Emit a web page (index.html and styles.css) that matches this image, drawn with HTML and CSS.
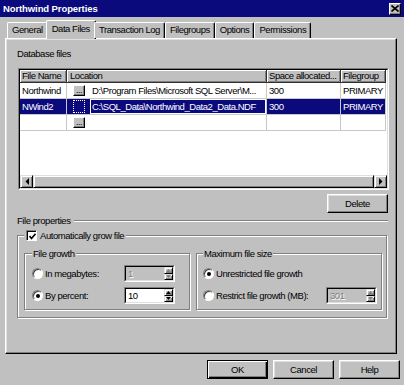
FILE: index.html
```html
<!DOCTYPE html>
<html>
<head>
<meta charset="utf-8">
<link rel="stylesheet" href="styles.css">
</head>
<body>
<div class="window">
  <div class="titlebar">
    <span class="title">Northwind Properties</span>
    <span class="close"><svg width="8" height="7" viewBox="0 0 8 7"><path d="M0.5 0.5 L7.5 6.5 M7.5 0.5 L0.5 6.5" stroke="#000" stroke-width="1.6"/></svg></span>
  </div>
  <div class="tabs">
    <div class="tab">General</div>
    <div class="tab active">Data Files</div>
    <div class="tab">Transaction Log</div>
    <div class="tab">Filegroups</div>
    <div class="tab">Options</div>
    <div class="tab">Permissions</div>
  </div>
  <div class="panel">
    <div class="label">Database files</div>
    <div class="grid">
      <div class="grid-inner">
        <div class="cols head">
          <div class="hcell">File Name</div>
          <div class="hcell">Location</div>
          <div class="hcell">Space allocated...</div>
          <div class="hcell">Filegroup</div>
        </div>
        <div class="cols row">
          <div class="cell">Northwind</div>
          <div class="cell loc"><span class="dots">...</span><span class="loctext">D:\Program Files\Microsoft SQL Server\M...</span></div>
          <div class="cell">300</div>
          <div class="cell">PRIMARY</div>
        </div>
        <div class="cols row selected">
          <div class="cell">NWind2</div>
          <div class="cell loc"><span class="focus"></span><span class="edit"><span class="sel">C:\SQL_Data\Northwind_Data2_Data.NDF</span></span></div>
          <div class="cell">300</div>
          <div class="cell">PRIMARY</div>
        </div>
        <div class="cols row">
          <div class="cell"></div>
          <div class="cell loc"><span class="dots">...</span></div>
          <div class="cell"></div>
          <div class="cell"></div>
        </div>
        <div class="fill"></div>
        <div class="hscroll">
          <span class="sbtn"><svg width="4" height="7" viewBox="0 0 4 7"><polygon points="4,0 4,7 0.5,3.5" fill="#000"/></svg></span>
          <span class="thumb"></span>
          <span class="sbtn"><svg width="4" height="7" viewBox="0 0 4 7"><polygon points="0,0 0,7 3.5,3.5" fill="#000"/></svg></span>
        </div>
      </div>
    </div>
    <div class="delete-row"><span class="btn">Delete</span></div>
    <div class="section"><span>File properties</span><span class="rule"></span></div>
    <div class="group outer">
      <div class="legend"><span class="check"><svg width="7" height="7" viewBox="0 0 7 7"><polyline points="0.5,3 2.5,5.5 6.5,0.8" fill="none" stroke="#000" stroke-width="1.6"/></svg></span><span>Automatically grow file</span></div>
      <div class="subgroups">
        <div class="group growth">
          <div class="legend">File growth</div>
          <div class="opt">
            <span class="radio"></span><span class="optlabel">In megabytes:</span>
            <span class="spin disabled"><span class="spin-in"><span class="val">1</span><span class="arrows"><span class="abtn"><svg width="5" height="3" viewBox="0 0 5 3"><polygon points="0,3 5,3 2.5,0" fill="#808080"/></svg></span><span class="abtn"><svg width="5" height="3" viewBox="0 0 5 3"><polygon points="0,0 5,0 2.5,3" fill="#808080"/></svg></span></span></span></span>
          </div>
          <div class="opt">
            <span class="radio on"></span><span class="optlabel">By percent:</span>
            <span class="spin"><span class="spin-in"><span class="val">10</span><span class="arrows"><span class="abtn"><svg width="5" height="3" viewBox="0 0 5 3"><polygon points="0,3 5,3 2.5,0" fill="#000"/></svg></span><span class="abtn"><svg width="5" height="3" viewBox="0 0 5 3"><polygon points="0,0 5,0 2.5,3" fill="#000"/></svg></span></span></span></span>
          </div>
        </div>
        <div class="group maxsize">
          <div class="legend">Maximum file size</div>
          <div class="opt">
            <span class="radio on"></span><span class="optlabel">Unrestricted file growth</span>
          </div>
          <div class="opt">
            <span class="radio"></span><span class="optlabel">Restrict file growth (MB):</span>
            <span class="spin disabled"><span class="spin-in"><span class="val">301</span><span class="arrows"><span class="abtn"><svg width="5" height="3" viewBox="0 0 5 3"><polygon points="0,3 5,3 2.5,0" fill="#808080"/></svg></span><span class="abtn"><svg width="5" height="3" viewBox="0 0 5 3"><polygon points="0,0 5,0 2.5,3" fill="#808080"/></svg></span></span></span></span>
          </div>
        </div>
      </div>
    </div>
  </div>
  <div class="buttons">
    <span class="btn default">OK</span>
    <span class="btn">Cancel</span>
    <span class="btn">Help</span>
  </div>
</div>
</body>
</html>
```

FILE: styles.css
```css
* { box-sizing: border-box; }
body {
  margin: 0;
  width: 404px;
  height: 385px;
  overflow: hidden;
  background: #c0c0c0;
  font-family: "Liberation Sans", Arial, sans-serif;
  font-size: 9.5px;
  letter-spacing: -0.45px;
  line-height: 11px;
  color: #000;
}
.window { display: flex; flex-direction: column; height: 385px; }

.titlebar {
  height: 17px;
  background: #0a0a7c;
  display: flex;
  align-items: center;
  justify-content: space-between;
  padding: 0 3px 0 3px;
}
.title { color: #fff; font-weight: bold; font-size: 9.5px; letter-spacing: -0.1px; }
.close {
  width: 12px; height: 12px;
  background: #c0c0c0;
  border: 1px solid; border-color: #fff #000 #000 #fff;
  box-shadow: inset -1px -1px 0 #808080;
  display: flex; align-items: center; justify-content: center;
}

.tabs {
  display: flex;
  align-items: flex-end;
  height: 21px;
  padding-left: 7px;
  position: relative;
  z-index: 1;
}
.tab {
  height: 16px;
  padding: 0 4px;
  line-height: 14px;
  border: 1px solid; border-bottom: none;
  border-color: #fff #000 #000 #fff;
  box-shadow: inset -1px 0 0 #808080;
  border-radius: 2px 2px 0 0;
  background: #c0c0c0;
}
.tab.active {
  height: 19px;
  margin: 0 -1px -1px -2px;
  padding: 0 5px;
  line-height: 15px;
}
.tab.active + .tab { margin-left: -1px; }

.panel {
  margin: 0 7px 0 5px;
  height: 316px;
  border: 1px solid;
  border-color: #fff #000 #000 #fff;
  box-shadow: inset -1px -1px 0 #808080, inset 1px 1px 0 #dfdfdf;
  padding: 0 8px 0 11px;
  display: flex;
  flex-direction: column;
}
.label { margin-top: 9px; }

.grid {
  margin-top: 9px;
  margin-left: 1px;
  width: 371px;
  height: 122px;
  border: 1px solid;
  border-color: #808080 #fff #fff #808080;
}
.grid-inner {
  height: 100%;
  border: 1px solid;
  border-color: #000 #dfdfdf #dfdfdf #000;
  display: flex;
  flex-direction: column;
  background: #fff;
}
.cols { display: grid; grid-template-columns: 47px 200px 74px 45px; }
.head { height: 13px; }
.hcell {
  background: #c0c0c0;
  border-right: 1px solid #303030;
  border-bottom: 1px solid #303030;
  box-shadow: inset 1px 1px 0 #fff, inset -1px -1px 0 #808080;
  padding-left: 2px;
  line-height: 12px;
  white-space: nowrap;
  overflow: hidden;
}
.hcell:nth-child(2) { padding-left: 3px; }
.row { height: 16px; }
.cell {
  border-right: 1px solid #c8c8c8;
  border-bottom: 1px solid #c8c8c8;
  padding-left: 2px;
  line-height: 15px;
  white-space: nowrap;
  overflow: hidden;
}
.cell.loc { display: flex; align-items: center; padding-left: 6px; }
.dots {
  width: 12px; height: 11px;
  flex: none;
  background: #c0c0c0;
  border: 1px solid; border-color: #fff #000 #000 #fff;
  box-shadow: inset -1px -1px 0 #808080;
  display: flex;
  align-items: flex-end;
  justify-content: center;
  font-size: 9px;
  line-height: 9px;
  letter-spacing: -0.5px;
  color: #000;
  overflow: hidden;
}
.loctext { margin-left: 7px; }
.selected .cell { background: #0a0a7c; color: #fff; }
.focus {
  width: 12px; height: 13px; flex: none;
  border: 1px dotted #fff;
}
.edit {
  margin-left: 5px;
  width: 177px;
  height: 15px;
  background: #fff;
  padding: 1px;
  display: flex;
}
.sel { background: #0a0a7c; color: #fff; flex: 1; padding-left: 1px; line-height: 13px; }
.fill { flex: 1; }
.hscroll { height: 13px; display: flex; background: #c0c0c0; }
.sbtn, .thumb {
  border: 1px solid; border-color: #dfdfdf #000 #000 #dfdfdf;
  box-shadow: inset 1px 1px 0 #fff, inset -1px -1px 0 #808080;
  background: #c0c0c0;
}
.sbtn { width: 13px; display: flex; align-items: center; justify-content: center; }
.thumb { flex: 1; }

.btn {
  display: flex; align-items: center; justify-content: center;
  width: 61px; height: 19px;
  background: #c0c0c0;
  border: 1px solid; border-color: #fff #000 #000 #fff;
  box-shadow: inset -1px -1px 0 #808080, inset 1px 1px 0 #dfdfdf;
}
.btn.default {
  border-color: #000;
  box-shadow: inset 1px 1px 0 #fff, inset -1px -1px 0 #000, inset -2px -2px 0 #808080;
}
.delete-row { display: flex; justify-content: flex-end; margin-top: 4px; }

.section { display: flex; align-items: center; gap: 4px; margin-top: 2px; }
.rule {
  flex: 1; height: 2px;
  border-top: 1px solid #808080;
  border-bottom: 1px solid #fff;
}

.group {
  border: 1px solid #808080;
  box-shadow: inset 1px 1px 0 #fff, 1px 1px 0 #fff;
}
.legend {
  margin-top: -6px;
  width: fit-content;
  background: #c0c0c0;
  padding: 0 2px;
  display: flex;
  align-items: center;
  gap: 3px;
}
.outer {
  margin-top: 9px;
  width: 370px;
  height: 83px;
}
.outer > .legend { margin-left: 6px; }
.check {
  width: 11px; height: 11px;
  background: #fff;
  border: 1px solid; border-color: #808080 #fff #fff #808080;
  box-shadow: inset 1px 1px 0 #000;
  display: flex; align-items: center; justify-content: center;
  padding: 1px 0 0 1px;
}
.subgroups { display: flex; gap: 6px; margin: 12px 0 0 6px; }
.subgroups .group { height: 57px; }
.growth { width: 166px; padding: 0 14px 0 7px; }
.maxsize { width: 186px; padding: 0 4px 0 6px; }
.subgroups .legend { margin-left: 0; padding: 0 1px; }
.opt { display: flex; align-items: center; height: 17px; }
.legend + .opt { margin-top: 6px; }
.opt + .opt { margin-top: 5px; }
.radio {
  width: 11px; height: 11px; flex: none;
  border-radius: 50%;
  background: #fff;
  border: 1px solid; border-color: #808080 #fff #fff #808080;
  box-shadow: inset 1px 1px 0 #404040;
  display: flex; align-items: center; justify-content: center;
}
.radio.on::after {
  content: "";
  width: 4px; height: 4px;
  border-radius: 50%;
  background: #000;
}
.optlabel { margin-left: 2px; }
.spin {
  margin-left: auto;
  width: 51px; height: 17px;
  border: 1px solid; border-color: #808080 #fff #fff #808080;
}
.spin-in {
  height: 100%;
  display: flex;
  border: 1px solid; border-color: #000 #dfdfdf #dfdfdf #000;
  background: #fff;
}
.val { flex: 1; padding-left: 2px; line-height: 13px; }
.spin.disabled .spin-in { background: #c0c0c0; }
.spin.disabled .val { color: #808080; text-shadow: 1px 1px 0 #fff; }
.arrows { width: 9px; display: flex; flex-direction: column; }
.abtn {
  flex: 1;
  background: #c0c0c0;
  border: 1px solid; border-color: #dfdfdf #000 #000 #dfdfdf;
  box-shadow: inset 1px 1px 0 #fff, inset -1px -1px 0 #808080;
  display: flex; align-items: center; justify-content: center;
}

.buttons {
  display: flex;
  justify-content: flex-end;
  gap: 5px;
  margin-top: 6px;
  padding-right: 4px;
}
```
